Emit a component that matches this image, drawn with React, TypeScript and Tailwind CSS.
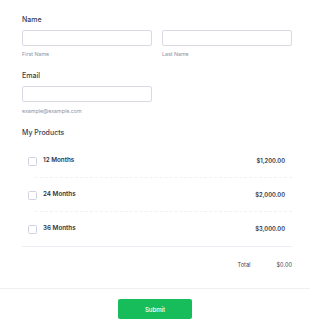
const products = [
  { name: "12 Months", price: "$1,200.00" },
  { name: "24 Months", price: "$2,000.00" },
  { name: "36 Months", price: "$3,000.00" },
];

const Label = ({ children }: { children: string }) => (
  <div className="h-[10px] text-[7px] leading-[10px] font-medium text-[#363d4f]">{children}</div>
);

const Sub = ({ children }: { children: string }) => (
  <div className="mt-[4px] h-[8px] text-[5.3px] leading-[8px] text-[#8d93a6]">{children}</div>
);

const Input = () => <div className="h-[16px] rounded-[2px] border border-[#d8dae5] bg-white" />;

export default function App() {
  return (
    <div
      className="w-[310px] h-[336px] bg-white overflow-hidden"
      style={{ fontFamily: "Inter, 'Liberation Sans', sans-serif" }}
    >
      <div className="pl-[22px] pr-[18px] pt-[15px]">
        <Label>Name</Label>
        <div className="mt-[5px] grid grid-cols-2 gap-[10px]">
          <div>
            <Input />
            <Sub>First Name</Sub>
          </div>
          <div>
            <Input />
            <Sub>Last Name</Sub>
          </div>
        </div>

        <div className="mt-[13px]">
          <Label>Email</Label>
        </div>
        <div className="mt-[5px] w-[130px]">
          <Input />
          <div className="mt-[5px] h-[8px] text-[5.3px] leading-[8px] text-[#8d93a6]">example@example.com</div>
        </div>

        <div className="mt-[13px]">
          <Label>My Products</Label>
        </div>

        <div className="mt-[6px] border-b border-[#eceef3]">
          {products.map((p, i) => (
            <div key={p.name} className="flex flex-col">
              <div className="h-[33px] flex items-center pl-[6px] pr-[7px] pt-[1px]">
                <div className="w-[9px] h-[9px] rounded-[1.5px] border border-[#d0d3df] bg-white" />
                <span className="ml-[6px] text-[6.3px] font-semibold text-[#2c3345]">{p.name}</span>
                <span className="ml-auto text-[5.8px] font-semibold text-[#2c3345]">{p.price}</span>
              </div>
              {i < products.length - 1 && (
                <div className="ml-[13px] border-t border-dashed border-[#f0f1f5]" />
              )}
            </div>
          ))}
          <div className="h-px" />
        </div>

        <div className="h-[37px] flex items-center justify-end gap-[26px] text-[5.6px] text-[#3a4152]">
          <span>Total</span>
          <span>$0.00</span>
        </div>
      </div>

      <div className="mt-[4px] h-px bg-[#eef0f4]" />

      <div className="mt-[10px] flex justify-center">
        <button className="w-[74px] h-[20px] rounded-[2px] bg-[#18bd5b] text-white text-[6px] font-medium">
          Submit
        </button>
      </div>
    </div>
  );
}
